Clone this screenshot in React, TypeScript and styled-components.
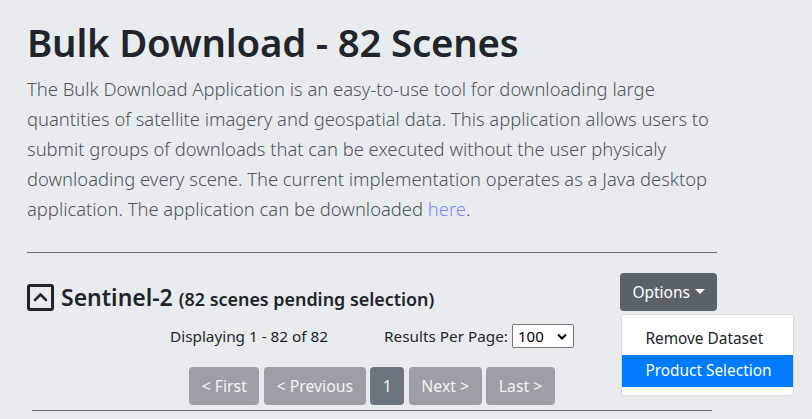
import React from "react";
import styled, { createGlobalStyle } from "styled-components";

const Global = createGlobalStyle`
  html, body { margin: 0; padding: 0; background: #e9ecef; }
  body { font-family: "Noto Sans", "Open Sans", sans-serif; color: #212529; }
  * { box-sizing: border-box; }
`;

const Page = styled.div`
  width: 812px;
  height: 419px;
  overflow: hidden;
  padding: 18px 0 0 27px;
`;

const Container = styled.div`
  width: 690px;
`;

const Title = styled.h1`
  margin: 0 0 8px;
  font-size: 38.4px;
  line-height: 48px;
  font-weight: 600;
  color: #212529;
  letter-spacing: -0.2px;
`;

const Lead = styled.p`
  margin: 0;
  font-size: 18.4px;
  line-height: 30px;
  font-weight: 300;
  color: #4f555b;
  white-space: nowrap;
`;

const Link = styled.a`
  color: #7a8cff;
  text-decoration: none;
`;

const Rule = styled.hr<{ $inset?: number }>`
  border: 0;
  border-top: 1px solid #6e6e6e;
  margin: 0 ${(p) => p.$inset ?? 0}px;
`;

const TopRule = styled(Rule)`
  margin-top: 28px;
`;

const HeaderRow = styled.div`
  display: flex;
  align-items: center;
  justify-content: space-between;
  margin-top: 20px;
  height: 38px;
`;

const DatasetTitle = styled.div`
  display: flex;
  align-items: center;
  gap: 7px;
  margin-top: 10px;
`;

const CollapseBox = styled.span`
  display: inline-flex;
  align-items: center;
  justify-content: center;
  width: 27px;
  height: 27px;
  border: 3px solid #212529;
  border-radius: 3px;
`;

const Name = styled.span`
  font-size: 23px;
  font-weight: 600;
  color: #212529;
`;

const Pending = styled.span`
  font-size: 17.9px;
  font-weight: 600;
  margin-left: 6px;
  color: #212529;
`;

const DropWrap = styled.div`
  position: relative;
`;

const OptionsButton = styled.button`
  display: inline-flex;
  align-items: center;
  gap: 5px;
  height: 38px;
  padding: 0 12px;
  border: 0;
  border-radius: 4px;
  background: #5a6268;
  color: #fff;
  font-family: inherit;
  font-size: 15.5px;
`;

const Caret = styled.span`
  width: 0;
  height: 0;
  border-left: 5px solid transparent;
  border-right: 5px solid transparent;
  border-top: 5px solid #fff;
  margin-top: -2px;
`;

const Menu = styled.div`
  position: absolute;
  top: 41px;
  left: 1px;
  width: 173px;
  padding: 8px 0;
  background: #fff;
  border: 1px solid rgba(0, 0, 0, 0.15);
  border-radius: 4px;
  z-index: 2;
`;

const MenuItem = styled.div<{ $active?: boolean }>`
  height: 32px;
  line-height: 32px;
  padding: 0 23px;
  font-size: 15.4px;
  white-space: nowrap;
  color: ${(p) => (p.$active ? "#fff" : "#212529")};
  background: ${(p) => (p.$active ? "#007bff" : "transparent")};
`;

const InfoRow = styled.div`
  display: flex;
  justify-content: center;
  align-items: center;
  gap: 56px;
  margin-top: 13px;
  height: 24px;
  font-size: 15.3px;
  color: #212529;
`;

const PerPage = styled.label`
  display: flex;
  align-items: center;
  gap: 4px;
`;

const FakeSelect = styled.span`
  display: inline-flex;
  align-items: center;
  justify-content: space-between;
  width: 62px;
  height: 24px;
  padding: 0 6px 0 5px;
  background: #fff;
  border: 1px solid #767676;
  border-radius: 2px;
  font-size: 15px;
  color: #000;
`;

const Pager = styled.div`
  display: flex;
  justify-content: center;
  gap: 4.5px;
  margin-top: 19px;
  margin-bottom: 5px;
`;

const PageBtn = styled.span<{ $active?: boolean }>`
  display: inline-flex;
  align-items: center;
  justify-content: center;
  height: 38px;
  padding: 0 ${(p) => (p.$active ? 12.5 : 12.6)}px;
  border-radius: 4px;
  background: ${(p) => (p.$active ? "#6c757d" : "#9aa0a5")};
  color: #f4f5f6;
  font-size: 15.8px;
`;

export default function App() {
  return (
    <Page>
      <Global />
      <Container>
        <Title>Bulk Download - 82 Scenes</Title>
        <Lead>
          The Bulk Download Application is an easy-to-use tool for downloading large
          <br />
          quantities of satellite imagery and geospatial data. This application allows users to
          <br />
          submit groups of downloads that can be executed without the user physicaly
          <br />
          downloading every scene. The current implementation operates as a Java desktop
          <br />
          application. The application can be downloaded <Link href="#">here</Link>.
        </Lead>
        <TopRule />
        <HeaderRow>
          <DatasetTitle>
            <CollapseBox>
              <svg width="15" height="10" viewBox="0 0 15 10">
                <path d="M2 8 L7.5 2.5 L13 8" fill="none" stroke="#212529" strokeWidth="2.6" strokeLinecap="round" strokeLinejoin="round" />
              </svg>
            </CollapseBox>
            <span>
              <Name>Sentinel-2</Name>
              <Pending>(82 scenes pending selection)</Pending>
            </span>
          </DatasetTitle>
          <DropWrap>
            <OptionsButton>
              Options <Caret />
            </OptionsButton>
            <Menu>
              <MenuItem>Remove Dataset</MenuItem>
              <MenuItem $active>Product Selection</MenuItem>
            </Menu>
          </DropWrap>
        </HeaderRow>
        <InfoRow>
          <span>Displaying 1 - 82 of 82</span>
          <PerPage>
            Results Per Page:
            <FakeSelect>
              100
              <svg width="10" height="7" viewBox="0 0 10 7">
                <path d="M1 1.5 L5 5.5 L9 1.5" fill="none" stroke="#000" strokeWidth="2" />
              </svg>
            </FakeSelect>
          </PerPage>
        </InfoRow>
        <Pager>
          <PageBtn>&lt; First</PageBtn>
          <PageBtn>&lt; Previous</PageBtn>
          <PageBtn $active>1</PageBtn>
          <PageBtn>Next &gt;</PageBtn>
          <PageBtn>Last &gt;</PageBtn>
        </Pager>
        <Rule $inset={5} />
      </Container>
    </Page>
  );
}
